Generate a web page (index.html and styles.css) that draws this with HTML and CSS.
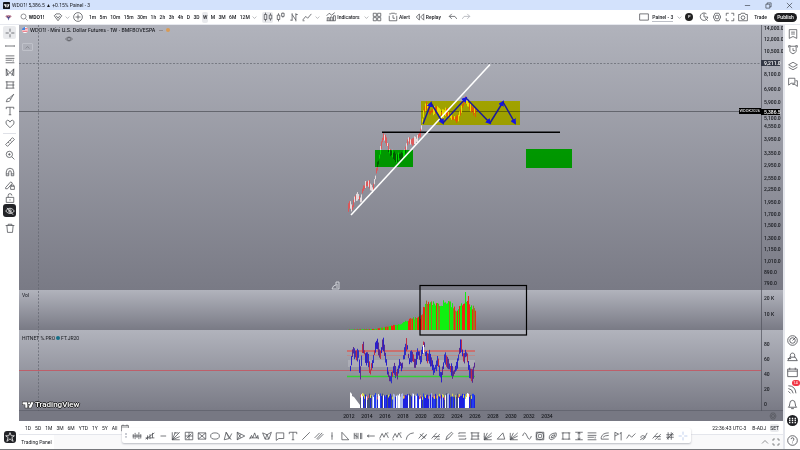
FILE: index.html
```html
<!DOCTYPE html>
<html lang="en">
<head>
    <meta charset="UTF-8">
    <title>WDO1! 5,386.5 ▲ +0.15% Painel - 3</title>
    <link rel="stylesheet" href="styles.css">
</head>
<body>
<header class="titlebar">
    <svg class="app_logo" viewBox="0 0 16 16"><rect width="16" height="16" rx="2" fill="#101318"/><path d="M2 5h6v7H5V8H2zM12 5h3l-3 7H9z" fill="#fff"/><circle cx="9.800" cy="6.300" r="1.300" fill="#fff"/></svg>
    <span class="app_title">WDO1! 5,386.5 ▲ +0.15% Painel - 3</span>
    <div class="window_buttons">
        <button data-icon="minimize" aria-label="Minimize"></button>
        <button data-icon="restore" aria-label="Restore"></button>
        <button data-icon="close" aria-label="Close"></button>
    </div>
</header>
<nav class="topbar">
    <button class="avatar" aria-label="Menu"><svg viewBox="0 0 16 16"><path d="M1 6q0-4 7-4t7 4l-4 3H5z" fill="#c08295"/><path d="M5 7h6l-3 8z" fill="#5960a8"/><path d="M4 5l4 3 4-3" fill="none" stroke="#433a70" stroke-width="2"/></svg></button>
    <button class="symbol"><svg data-icon="search"></svg>WDO1!</button>
    <div class="compare">
        <button data-icon="gem" aria-label="Symbol type"></button>
        <button class="chevron" data-icon="down" aria-label="More symbols"></button>
    </div>
    <button class="add" data-icon="plus" aria-label="Compare"></button>
    <div class="intervals">
        <button>1m</button>
        <button>5m</button>
        <button>10m</button>
        <button>15m</button>
        <button>30m</button>
        <button>1h</button>
        <button>2h</button>
        <button>3h</button>
        <button>4h</button>
        <button>D</button>
        <button>3D</button>
        <button class="active">W</button>
        <button>M</button>
        <button>3M</button>
        <button>6M</button>
        <button>12M</button>
    </div>
    <button class="chevron" data-icon="down" aria-label="More intervals"></button>
    <div class="styles">
        <button class="active" data-icon="candles" aria-label="Candles"></button>
        <button data-icon="hollow" aria-label="Hollow candles"></button>
        <button data-icon="bars" aria-label="Bars"></button>
        <button data-icon="line" aria-label="Line"></button>
        <button class="chevron" data-icon="down" aria-label="More styles"></button>
    </div>
    <button class="labelled indicators"><svg data-icon="indicators"></svg>Indicators</button>
    <button class="chevron" data-icon="down" aria-label="Favorite indicators"></button>
    <button class="templates" data-icon="grid" aria-label="Templates"></button>
    <button class="labelled"><svg data-icon="alert"></svg>Alert</button>
    <button class="labelled replay"><svg data-icon="rewind"></svg>Replay</button>
    <button class="undo" data-icon="undo" aria-label="Undo"></button>
    <button class="undo light" data-icon="redo" aria-label="Redo"></button>
    <div class="topbar_right">
        <button data-icon="square" aria-label="Layout"></button>
        <button class="layout_name">Painel - 3</button>
        <button class="chevron" data-icon="down" aria-label="Layouts"></button>
        <button class="badge_p">P</button>
        <button data-icon="quick" aria-label="Quick search"></button>
        <button data-icon="gear" aria-label="Settings"></button>
        <button data-icon="full" aria-label="Fullscreen"></button>
        <button data-icon="camera" aria-label="Snapshot"></button>
        <button class="trade">Trade</button>
        <button class="publish">Publish</button>
    </div>
</nav>
<div class="workspace">
    <aside class="rail rail_left">
        <div class="rail_group">
            <button class="active" data-icon="cross" aria-label="Cross"></button>
            <button data-icon="hline" aria-label="Trend lines"></button>
            <button data-icon="fib" aria-label="Fibonacci"></button>
            <button data-icon="xabcd" aria-label="Patterns"></button>
            <button data-icon="forecast" aria-label="Forecast"></button>
            <button data-icon="brush" aria-label="Brush"></button>
            <button data-icon="text" aria-label="Text"></button>
            <button data-icon="heart" aria-label="Icons"></button>
        </div>
        <div class="rail_group line">
            <button data-icon="ruler" aria-label="Measure"></button>
            <button data-icon="zoom" aria-label="Zoom in"></button>
        </div>
        <div class="rail_group">
            <button data-icon="magnet" aria-label="Magnet"></button>
            <button data-icon="penlock" aria-label="Stay in drawing mode"></button>
            <button data-icon="lock" aria-label="Lock"></button>
            <button class="dark" data-icon="hide" aria-label="Hide drawings"></button>
        </div>
        <div class="rail_group">
            <button data-icon="trash" aria-label="Remove"></button>
        </div>
        <button class="dark star" data-icon="star" aria-label="Favorites"></button>
    </aside>
    <main class="center">
        <section class="chart">
            <svg class="plot" viewBox="19 25 764 386" preserveAspectRatio="none">
                <defs>
                    <linearGradient id="pane" x2="0" y2="1"><stop stop-color="#b1b3bc"/><stop offset="1" stop-color="#797a85"/></linearGradient>
                    <marker id="arrow" viewBox="0 0 6 6" refX="4" refY="3" markerWidth="6" markerHeight="6" markerUnits="userSpaceOnUse" orient="auto"><path d="M0 0l6 3-6 3z" fill="#1414e6"/></marker>
                </defs>
                <rect x="19" y="25" width="764" height="265" fill="url(#pane)"/>
                <rect x="19" y="290" width="764" height="40" fill="url(#pane)"/>
                <rect x="19" y="330" width="764" height="81" fill="url(#pane)"/>
                <path d="M19 63.500H761M38.500 25V411" class="crosshair"/>
                <path d="M19 111.500H761" class="price_line"/>
                <g id="candles"></g>
                <g id="volume"></g>
                <rect x="348" y="360" width="127" height="7" fill="#fff" opacity=".18"/>
                <path d="M347 351H475" stroke="#f23c30" stroke-width="1.200"/>
                <path d="M347 355.500H475" stroke="#d07a72" stroke-width=".6"/>
                <path d="M347 376.500H475" stroke="#35d035" stroke-width="1.500"/>
                <path d="M19 370.500H761" stroke="#c8505c" stroke-width=".8"/>
                <g id="oscillator"></g>
                <g id="trend"></g>
                <rect x="421" y="101" width="99" height="24" class="zone yellow"/>
                <rect x="375" y="150" width="38" height="17" class="zone green"/>
                <rect x="526" y="149" width="46" height="19" class="zone green"/>
                <path d="M382 132.300H560" stroke="#000" stroke-width="1.400"/>
                <path d="M351 215L490 64.500" stroke="#fff" stroke-width="1.600"/>
                <g class="waves">
                    <path d="M423 124L431 103"/><path d="M431 103L443 123"/><path d="M443 123L466 98"/>
                    <path d="M466 98L490 123"/><path d="M490 123L503 102"/><path d="M503 102L515 123"/>
                </g>
                <rect x="420" y="285.500" width="106.500" height="49.500" fill="none" stroke="#000" stroke-width="1.200"/>
                <path d="M332 289h7v-7h-3v3q-3 0-4 4zM337 284v4" fill="none" stroke="#d8dae0" stroke-width=".9"/>
                <path d="M761.500 25V411" stroke="#50525c" stroke-width=".7"/>
                <path d="M19 411H783" stroke="#50525c"/>
            </svg>
            <div class="legend_main">
                <svg class="flag" viewBox="0 0 16 16"><circle cx="8" cy="8" r="8" fill="#fff"/><path d="M1 4h14M0 8h16M1 12h14" stroke="#e85a68" stroke-width="2"/><path d="M8 0v8H0Q0 1 8 0z" fill="#4084e0"/></svg>
                <span>WDO1! · Mini U.S. Dollar Futures · 1W · BMFBOVESPA</span>
                <i class="dash"></i><i class="dot"></i>
            </div>
            <svg class="eye" data-icon="eye"></svg>
            <button class="collapse" data-icon="up" aria-label="Collapse legend"></button>
            <span class="legend_vol">Vol</span>
            <span class="legend_osc">HITNET %.PRO <i></i>FT.JR20</span>
            <div class="watermark">
                <svg viewBox="0 0 22 14"><path d="M1 2h9v10H6V6H1zM16 2h5l-4 10h-5z"/><circle cx="13" cy="4" r="2"/></svg>
                TradingView
            </div>
            <div class="scale" id="scale"></div>
            <span class="contract">WDOK2026</span>
        </section>
        <div class="time_axis">
            <div id="years"></div>
            <button data-icon="gear" aria-label="Axis settings"></button>
        </div>
        <div class="ranges">
            <button>1D</button>
            <button>5D</button>
            <button>1M</button>
            <button>3M</button>
            <button>6M</button>
            <button>YTD</button>
            <button>1Y</button>
            <button>5Y</button>
            <button>All</button>
            <button class="goto" data-icon="calendar" aria-label="Go to date"></button>
            <span class="clock">22:36:43 UTC-3</span>
            <button>B-ADJ</button>
            <button class="active">SET</button>
        </div>
        <footer class="panel">
            <button class="panel_tab">Trading Panel</button>
            <div class="panel_buttons">
                <button data-icon="up" aria-label="Open panel"></button>
                <button data-icon="full" aria-label="Maximize panel"></button>
            </div>
        </footer>
    </main>
    <aside class="rail rail_right">
        <button data-icon="watch" aria-label="Watchlist"></button>
        <button data-icon="alarm" aria-label="Alerts"></button>
        <button data-icon="layers" aria-label="Object tree"></button>
        <button data-icon="chat" aria-label="Chats"></button>
        <div class="rail_bottom">
            <button data-icon="radar" aria-label="Screeners"></button>
            <button data-icon="pine" aria-label="Pine"></button>
            <button data-icon="calendar" aria-label="Calendar"></button>
            <button class="feed" aria-label="Feed"><svg data-icon="feed"></svg><span>14</span></button>
            <button data-icon="bell" aria-label="Notifications"></button>
            <button class="apps" data-icon="apps" aria-label="Products"></button>
            <button class="help" data-icon="help" aria-label="Help"></button>
        </div>
    </aside>
</div>
<div class="drawbar" id="drawbar"></div>
<script src="chart.js"></script>
</body>
</html>
```

FILE: styles.css
```css
*{
    box-sizing: border-box;
}
html, body{
    height: 100%;
}
body{
    margin: 0;
    display: flex;
    flex-direction: column;
    overflow: hidden;
    background-color: white;
    border-bottom: 1px solid #77787c;
    font-family: Roboto, "Liberation Sans", sans-serif;
    font-size: 6px;
    line-height: 8px;
    color: #16181d;
}
button{
    display: flex;
    align-items: center;
    justify-content: center;
    flex: none;
    margin: 0;
    padding: 0;
    border: 0;
    background: none;
    font: inherit;
    color: inherit;
    cursor: pointer;
}
svg{
    display: block;
    flex: none;
}
.icon{
    width: 10px;
    height: 10px;
    fill: none;
    stroke: #4b4d53;
    stroke-width: 1.2;
}
.titlebar{
    display: flex;
    align-items: center;
    flex: none;
    height: 10px;
    padding-left: 3px;
    background-color: #d3e2fc;
}
.app_logo{
    width: 7px;
    height: 7px;
    margin-right: 2px;
}
.app_title{
    font-size: 5px;
}
.window_buttons{
    display: flex;
    margin-left: auto;
}
.window_buttons>button{
    width: 21px;
    height: 10px;
}
.window_buttons .icon{
    width: 7px;
    height: 7px;
    stroke: #16181d;
}
.topbar{
    display: flex;
    align-items: center;
    flex: none;
    height: 15px;
    padding: 0 3px 0 4px;
    border-bottom: 1px solid #e6e8ee;
    font-size: 5px;
    font-weight: 500;
}
.avatar, .avatar svg{
    width: 9px;
    height: 7px;
}
.symbol{
    width: 26px;
    margin: 0 8px 0 6px;
    gap: 1px;
    font-weight: bold;
}
.symbol .icon{
    width: 8px;
    height: 8px;
}
.compare{
    display: flex;
    gap: 1px;
}
.chevron{
    width: 6px;
}
.chevron .icon{
    width: 5px;
    height: 5px;
}
.add{
    margin: 0 5px 0 3px;
}
.intervals{
    display: flex;
    flex: none;
    width: 163px;
    justify-content: space-between;
}
.intervals>button{
    height: 11px;
    padding: 0 1px;
}
button.active{
    background-color: #e9eaed;
    border-radius: 2px;
}
.styles{
    display: flex;
    align-items: center;
    gap: 2px;
    margin: 0 6px 0 5px;
}
.styles>button{
    width: 11px;
    height: 11px;
}
.styles>.chevron{
    width: 6px;
}
.labelled{
    gap: 1px;
    margin-left: 6px;
}
.labelled.indicators{
    width: 34px;
    margin: 0 3px 0 0;
}
.templates{
    margin-left: 3px;
}
.replay{
    margin-left: 5px;
}
.undo{
    margin-left: 7px;
}
.light .icon{
    stroke: #a7a9b0;
}
.undo + .undo{
    margin-left: 3px;
}
.topbar_right{
    display: flex;
    align-items: center;
    gap: 3px;
    margin-left: auto;
}
.layout_name{
    border-bottom: 1px solid #bcbfc7;
}
.badge_p{
    width: 8px;
    height: 8px;
    margin-right: 3px;
    border-radius: 4px;
    background-color: #222;
    color: white;
    font-size: 4px;
}
.trade{
    margin: 0 4px 0 3px;
}
.publish{
    width: 23px;
    height: 9px;
    border-radius: 5px;
    background-color: #1d1d1f;
    color: white;
}
.workspace{
    display: flex;
    flex: 1;
    min-height: 0;
}
.rail{
    display: flex;
    flex-direction: column;
    align-items: center;
    flex: none;
}
.rail_left{
    width: 19px;
    padding-top: 1px;
}
.rail_left button{
    width: 13px;
    height: 13px;
}
.rail_group{
    padding-bottom: 4px;
}
.rail_group:first-child{
    padding-bottom: 3px;
}
.rail_group.line{
    padding-top: 1px;
    border-top: 1px solid #dfe1e7;
}
.dark{
    border-radius: 3px;
    background-color: #222327;
}
.dark .icon{
    stroke: white;
}
.rail_left>.star{
    width: 12px;
    height: 12px;
    margin: auto 0 6px;
}
.rail_right{
    width: 17px;
    padding-top: 1px;
    border-left: 2px solid #e4e6ec;
}
.rail_right button{
    width: 14px;
    height: 16px;
}
.rail_bottom{
    margin-top: auto;
    padding-bottom: 1px;
}
.rail_bottom .icon, .apps{
    width: 11px;
    height: 11px;
}
.feed{
    position: relative;
}
.feed>span{
    position: absolute;
    top: 0;
    right: 0;
    width: 8px;
    border-radius: 4px;
    background-color: #f23645;
    color: white;
    font-size: 4px;
    line-height: 6px;
}
.help{
    margin: 4px 0 0;
}
.center{
    display: flex;
    flex-direction: column;
    flex: 1;
    min-width: 0;
}
.chart{
    position: relative;
    flex: 1;
    min-height: 0;
}
.plot{
    position: absolute;
    width: 100%;
    height: 100%;
}
.crosshair{
    fill: none;
    stroke: #62646e;
    stroke-width: .7;
    stroke-dasharray: 2 1.500;
}
.price_line{
    stroke: #4b4d55;
    stroke-width: .7;
}
.zone{
    mix-blend-mode: multiply;
}
.yellow{
    fill: #ffff00;
}
.green{
    fill: #00ff00;
}
.waves>path{
    stroke: #1b1b9c;
    stroke-width: 1.500;
    marker-end: url(#arrow);
}
.legend_main{
    position: absolute;
    top: 1px;
    left: 3px;
    display: flex;
    align-items: center;
    font-family: Inter, "Liberation Sans", sans-serif;
    font-size: 5px;
    font-weight: 500;
}
.flag{
    width: 6px;
    height: 6px;
    margin-right: 2px;
}
.dash{
    width: 4px;
    height: 1px;
    margin: 0 3px 0 4px;
    background-color: #8f8c91;
}
.dot{
    width: 4px;
    height: 4px;
    border-radius: 2px;
    background-color: #d99b55;
}
.chart>.eye{
    position: absolute;
    top: 10px;
    left: 46px;
    width: 8px;
    height: 8px;
}
.collapse{
    position: absolute;
    top: 18px;
    left: 3px;
    width: 11px;
    height: 8px;
    border: 1px solid #bfc1c9;
    border-radius: 1px;
}
.collapse .icon{
    width: 5px;
    height: 5px;
}
.legend_vol, .legend_osc{
    position: absolute;
    left: 3px;
    top: 69%;
    font-size: 5px;
}
.legend_osc{
    top: 80%;
    display: flex;
    align-items: center;
}
.legend_osc>i{
    width: 4px;
    height: 4px;
    margin: 0 1px;
    border-radius: 2px;
    background-color: #167088;
}
.watermark{
    position: absolute;
    bottom: 2px;
    left: 3px;
    display: flex;
    align-items: center;
    gap: 1px;
    color: white;
    font-size: 8px;
    font-weight: 500;
    text-shadow: 1px 0 #222, -1px 0 #222, 0 1px #222, 0 -1px #222;
}
.watermark>svg{
    width: 12px;
    height: 8px;
    fill: white;
    stroke: #222;
    stroke-width: 2;
    paint-order: stroke;
}
.scale{
    position: absolute;
    top: 0;
    right: 0;
    width: 22px;
    height: 100%;
    overflow: hidden;
    font-size: 5px;
    font-weight: 500;
    line-height: 6px;
}
.scale>span{
    position: absolute;
    left: 0;
    width: 19px;
    padding-left: 3px;
    transform: translateY(-50%);
}
.scale>.badge_cursor{
    background-color: #343845;
    color: white;
}
.scale>.badge_last, .contract{
    background-color: black;
    color: white;
}
.contract{
    position: absolute;
    top: 22.3%;
    right: 22px;
    padding: 0 1px;
    transform: translateY(-50%);
    font-size: 4px;
    line-height: 6px;
}
.time_axis{
    position: relative;
    display: flex;
    align-items: center;
    justify-content: flex-end;
    flex: none;
    height: 10px;
    padding-right: 6px;
    background-color: #777883;
    font-size: 5px;
    font-weight: 500;
}
.time_axis span{
    position: absolute;
    top: 1px;
    transform: translateX(-50%);
}
.time_axis .icon{
    width: 8px;
    height: 8px;
}
.ranges{
    display: flex;
    align-items: center;
    flex: none;
    gap: 4px;
    height: 14px;
    padding: 0 4px 0 6px;
    border-bottom: 1px solid #e4e6ec;
    font-size: 5px;
}
.goto .icon{
    width: 8px;
    height: 8px;
}
.clock{
    margin: 0 2px 0 auto;
}
.panel{
    display: flex;
    flex: none;
    justify-content: space-between;
    height: 14px;
    background-color: #f9f9fa;
}
.panel_tab{
    width: 35px;
    background-color: white;
    font-size: 5px;
}
.panel_buttons{
    display: flex;
    align-items: center;
    gap: 3px;
    padding-right: 3px;
}
.panel_buttons .icon{
    width: 8px;
    height: 8px;
}
.drawbar{
    position: absolute;
    left: 122px;
    bottom: 7px;
    display: flex;
    align-items: center;
    height: 15px;
    padding: 0 2px 0 8px;
    border-radius: 2px;
    background-color: white;
    box-shadow: 0 1px 2px #b9bbc2;
}
.drawbar::before{
    content: "";
    position: absolute;
    left: 3px;
    height: 5px;
    border-left: 2px dotted #c9cbd2;
}
.drawbar>button{
    width: 13px;
    height: 13px;
}
.drawbar>button:last-child .icon{
    stroke: #aec2e8;
}
```

FILE: chart.js
```javascript
const icons = {
    minimize: 'M2 8h12',
    restore: 'M2 5h9v9H2zM5 5V2h9v9h-3',
    close: 'M2 2l12 12M14 2L2 14',
    search: 'M2 7a5 5 0 1 0 10 0a5 5 0 1 0-10 0M11 11l4 4',
    gem: 'M2 6l3-3h6l3 3-6 8zM5 6l3 4 3-4',
    down: 'M2 5l6 6 6-6',
    up: 'M2 11l6-6 6 6',
    plus: 'M1 8a7 7 0 1 0 14 0a7 7 0 1 0-14 0M8 4v8M4 8h8',
    candles: 'M4 1v3M4 12v3M2 4h4v8H2zM12 2v3M12 11v3M10 5h4v6h-4z',
    hollow: 'M4 2v3M4 12v3M2 5h4v7H2zM11 1v1M11 7v2M9 2h4v5H9z',
    bars: 'M2 13h3M5 2v12M5 4l6 9M11 2v13M11 4h3',
    line: 'M1 13l5-6 3 3 6-7M1 14h3',
    indicators: 'M1 14h14M2 14V9h3v5M7 14V8h3v6M12 14V6h3v8M1 6l4-4 4 3 5-4',
    grid: 'M2 2h5v5H2zM9 2h5v5H9zM2 9h5v5H2zM9 9h5v5H9z',
    alert: 'M2 3h3M11 3h3M2 6v8h12V6M8 5v5h3M5 2h6',
    rewind: 'M7 3L2 8l5 5zM14 3L9 8l5 5z',
    undo: 'M6 3L2 7l4 4M2 7h9l3 4',
    redo: 'M10 3l4 4-4 4M14 7H5l-3 4',
    square: 'M1 3h14v10H1z',
    quick: 'M12 3a6 6 0 1 0 2 5M8 2v6h6M10 10l4 4',
    gear: 'M2 8l3-6h6l3 6-3 6H5zM5 8a3 3 0 1 0 6 0a3 3 0 1 0-6 0',
    full: 'M2 6V2h4M10 2h4v4M14 10v4h-4M6 14H2v-4',
    camera: 'M1 4h3l1-2h6l1 2h3v10H1zM5 9a3 3 0 1 0 6 0a3 3 0 1 0-6 0',
    cross: 'M8 1v5M8 10v5M1 8h5M10 8h5',
    hline: 'M1 8h14M1 7v2M15 7v2',
    fib: 'M1 3h14M1 7h14M1 10h10M1 14h14M13 9v3',
    xabcd: 'M2 14V3l6 6 6-6v11l-6-5zM2 3l3 11M14 3l-3 11',
    forecast: 'M3 2v12M1 3h14M3 8h12M1 13h14M13 3v10',
    brush: 'M2 14q1-6 5-6l2 2q0 4-7 4zM7 8l7-6-5 8',
    text: 'M2 5V2h12v3M8 2v12M6 14h4',
    heart: 'M8 14L2 8q-2-5 2-6 3 0 4 3 1-3 4-3 4 1 2 6z',
    ruler: 'M1 12L12 1l3 3L4 15zM5 8l2 2M8 5l2 2',
    zoom: 'M2 7a5 5 0 1 0 10 0a5 5 0 1 0-10 0M11 11l4 4M7 5v4M5 7h4',
    magnet: 'M2 14V8a6 6 0 0 1 12 0v6h-4V8a2 2 0 0 0-4 0v6zM2 11h4M10 11h4',
    penlock: 'M1 12l8-9 3 2-8 9H1zM9 10h6v5H9zM10 10V8h4v2',
    lock: 'M2 7h12v8H2zM5 7V4a3 3 0 0 1 6 0M8 10v2',
    hide: 'M1 8q7-9 14 0-7 8-14 0M6 8a2 2 0 1 0 4 0a2 2 0 1 0-4 0M3 3l10 11',
    eye: 'M1 8q7-8 14 0-7 8-14 0M5 8a3 3 0 1 0 6 0a3 3 0 1 0-6 0',
    trash: 'M1 4h14M5 4V2h6v2M3 4l1 11h8l1-11',
    star: 'M8 1l2 5h5l-4 3 2 6-5-4-5 4 2-6-4-3h5z',
    watch: 'M2 1h12v14l-6-3-6 3zM5 5h6M5 8h6',
    alarm: 'M3 2h10v8q-5 8-10 0zM1 4V1h3M12 1h3v3M8 5v4h3',
    layers: 'M8 2l7 4-7 4-7-4zM1 10l7 4 7-4',
    chat: 'M1 2h10v8H5l-4 3zM12 6h3v9l-4-3H7',
    radar: 'M1 8a7 7 0 1 0 14 0a7 7 0 1 0-14 0M4 8a4 4 0 1 0 8 0a4 4 0 1 0-8 0M8 8l5-5',
    pine: 'M1 14h14l-3-5H4zM5 9q-1-6 3-6t3 6M1 11h5',
    calendar: 'M1 3h14v11H1zM1 6h14M4 1v3M12 1v3',
    feed: 'M2 4q10 0 11 11M2 8q6 1 7 7M2 12l3 3',
    bell: 'M2 12q2-1 2-5 0-5 4-5t4 5q0 4 2 5zM6 14h4',
    help: 'M1 8a7 7 0 1 0 14 0a7 7 0 1 0-14 0M6 6q0-2 2-2t2 2-2 3M8 11v1',
    // drawing tools
    barsPattern: 'M2 5v7M5 3v10M8 5v6M11 2v11M14 5v7M1 8h14',
    ghost: 'M1 11h14M4 7v7M8 5v8M12 3v8M1 13L15 3',
    dashLine: 'M4 8h9',
    gannFan: 'M2 2v12h12M2 14L14 2M2 14l5-12M2 14l12-5M5 3h7',
    gannBox: 'M2 2h12v12H2zM8 2v12M2 8h12M4 12l8-8',
    rotated: 'M2 3h12v10H2zM2 3l12 10M2 13L14 3',
    ellipse: 'M1 8a7 5 0 1 0 14 0a7 5 0 1 0-14 0',
    abcd: 'M2 14L5 2l5 10 4-8M5 2l8 12M2 14l8-2',
    triangles: 'M2 2v12l12-6zM2 2l6 9M2 14l6-9',
    head: 'M1 13l3-6 2 4 3-8 3 8 2-4 1 6M1 11h14',
    threeDrives: 'M1 3l4 10 3-7 3 7 4-11M1 3l7 3 7-4M5 13h6',
    callout: 'M2 3h12v9H6l-4 3z',
    slash: 'M2 14L14 2',
    channel: 'M1 11L9 3M6 14l9-9M4 13l9-10',
    vline: 'M8 2v12M7 8h2',
    triangle: 'M3 2v12h11z',
    cycles: 'M2 3v10M5 3v10M8 3v10M12 3v10M14 3v10M2 6l6 4',
    arrow: 'M14 8H2M5 6L2 8l3 2',
    elliott: 'M1 12l4-8 3 6 3-7 4 8M1 14h2M13 3h2',
    curve: 'M2 14Q3 4 14 3',
    pitch: 'M1 12L9 3M5 14l9-9M3 5l9 7M8 12l5-5',
    pitchfan: 'M1 12l8-9M5 14l9-9M4 9h10M9 13h5',
    pen: 'M3 14l2-6 7-6 2 2-6 7z',
    levels: 'M3 3h11M2 8h12M3 13h11M3 3v2M14 11v2',
    fan: 'M2 14L14 3M2 14V3M2 14h12M2 14L7 3M2 14l12-6M2 9l5 5',
    wedge: 'M2 13h12L11 3z',
    wave: 'M1 8q3-10 7 0t7 0',
    circles: 'M2 8a6 6 0 1 0 12 0a6 6 0 1 0-12 0M5 8a3 3 0 1 0 6 0a3 3 0 1 0-6 0M2 2h12v12H2z',
    spiral: 'M2 12Q1 4 13 3q2 8-8 11zM5 11Q5 6 11 6q0 5-6 5',
    box: 'M3 3h10v10H3zM1 3h3M12 3h3M1 13h3M12 13h3',
    range: 'M2 2h12M2 14h12M8 2v12M6 5l2-3 2 3M6 11l2 3 2-3',
    arcs: 'M2 13h12M2 10q2-7 12-7M5 10q2-3 9-3M2 10v3',
    flag: 'M3 15V2l6 3-6 3M13 15V2M11 5l2-3',
    zigzag: 'M1 12l4-6 4 4 6-6',
    loop: 'M2 14Q12 10 13 3M3 11q0-5 5-3t-2 6',
    hash: 'M5 2v12M10 2v12M2 6h12M2 10h12M3 13L13 3'
};

function iconMarkup(name) {
    if (name === 'apps') {
        return '<svg class="icon" viewBox="0 0 16 16"><circle cx="8" cy="8" r="8" fill="#1f2024" stroke="none"/>' +
            '<path stroke="#fff" stroke-width="2" d="M3 5h2M7 5h2M11 5h2M3 8h2M7 8h2M11 8h2M3 11h2M7 11h2M11 11h2"/></svg>';
    }
    return '<svg class="icon" viewBox="0 0 16 16"><path d="' + icons[name] + '"/></svg>';
}

const drawTools = ['barsPattern', 'ghost', 'dashLine', 'gannFan', 'gannBox', 'rotated', 'ellipse', 'abcd', 'triangles',
    'head', 'threeDrives', 'callout', 'text', 'slash', 'channel', 'vline', 'triangle', 'cycles', 'arrow', 'elliott',
    'elliott', 'curve', 'pitch', 'pitchfan', 'pen', 'levels', 'forecast', 'fan', 'wedge', 'fan', 'wave', 'circles',
    'spiral', 'box', 'range', 'fib', 'arcs', 'flag', 'zigzag', 'loop', 'pitchfan', 'hash', 'cross'];
document.getElementById('drawbar').innerHTML = drawTools.map(function (name) {
    return '<button data-icon="' + name + '" aria-label="' + name + '"></button>';
}).join('');

document.querySelectorAll('[data-icon]').forEach(function (el) {
    if (el.tagName === 'BUTTON') {
        el.innerHTML = iconMarkup(el.dataset.icon);
    } else {
        el.classList.add('icon');
        el.setAttribute('viewBox', '0 0 16 16');
        el.innerHTML = '<path d="' + icons[el.dataset.icon] + '"/>';
    }
});

// price scale: label and its y on the 25..411 plot
const prices = [['14,000.0', 28], ['12,000.0', 39], ['10,500.0', 51], ['8,100.0', 74], ['6,900.0', 89],
    ['5,900.0', 102], ['5,100.0', 118], ['4,550.0', 126], ['3,950.0', 139], ['3,350.0', 153], ['2,950.0', 165],
    ['2,550.0', 178], ['2,250.0', 189], ['1,950.0', 202], ['1,700.0', 214], ['1,500.0', 225], ['1,300.0', 238],
    ['1,150.0', 249], ['1,010.0', 261], ['890.0', 272], ['790.0', 283], ['20 K', 298], ['10 K', 314], ['80', 344],
    ['60', 359], ['40', 374], ['20', 389], ['0', 404], ['9,211.0', 63.5, 'badge_cursor'], ['5,386.5', 111.5, 'badge_last']];
document.getElementById('scale').innerHTML = prices.map(function (p) {
    return '<span class="' + (p[2] || '') + '" style="top:' + ((p[1] - 25) / 386 * 100).toFixed(2) + '%">' + p[0] + '</span>';
}).join('');

let years = '';
for (let i = 0; i < 12; i++) {
    years += '<span style="left:' + ((330 + i * 18) / 764 * 100).toFixed(2) + '%">' + (2012 + i * 2) + '</span>';
}
document.getElementById('years').innerHTML = years;

let seed = 7;
function rnd() {
    seed = (seed * 16807) % 2147483647;
    return seed / 2147483647;
}

function at(points, x) {
    for (let i = 1; i < points.length; i++) {
        if (x <= points[i][0]) {
            const a = points[i - 1], b = points[i];
            return a[1] + (b[1] - a[1]) * (x - a[0]) / (b[0] - a[0]);
        }
    }
    return points[points.length - 1][1];
}

function bar(x, y1, y2, color, w) {
    return '<path d="M' + x.toFixed(1) + ' ' + y1.toFixed(1) + 'V' + y2.toFixed(1) + '" stroke="' + color + '" stroke-width="' + w + '"/>';
}

const price = [[348, 210], [350, 204], [352, 209], [355, 197], [358, 196], [361, 201], [363, 189], [366, 184], [369, 184],
    [373, 190], [376, 174], [379, 160], [381, 146], [384, 136], [387, 143], [390, 152], [393, 155], [396, 158], [400, 156],
    [404, 155], [406, 149], [408, 139], [412, 143], [417, 139], [420, 135], [422, 126], [424, 110], [427, 106], [430, 112],
    [437, 109], [442, 114], [447, 112], [452, 117], [458, 119], [461, 110], [465, 99], [469, 105], [475, 112]];
let out = '';
for (let x = 348.5; x < 476; x += 1) {
    const y = at(price, x) + (rnd() - .5) * 2;
    const h = 1.5 + rnd() * 3;
    out += bar(x, y - h, y + h, rnd() < .6 ? '#f04a4a' : '#fbeeee', .8);
}
document.getElementById('candles').innerHTML = out;

const volume = [[348, .3], [375, 1], [385, 3], [400, 6], [410, 11], [421, 13], [425, 27], [430, 29], [437, 28],
    [441, 23], [445, 31], [453, 24], [458, 20], [463, 27], [470, 26], [475, 21]];
out = '';
for (let x = 348.5; x < 476; x += 1) {
    let h = at(volume, x) * (.85 + rnd() * .25);
    if (x === 465.5) h = 38;
    if (x === 468.5) h = 34;
    const up = x > 442 && x < 449 ? .95 : .5;
    out += bar(x, 330, 330 - h, rnd() < up ? '#10f010' : rnd() < .7 ? '#ee2a14' : '#9a7a20', 1);
}
document.getElementById('volume').innerHTML = out;

const osc = [[350, 374], [353, 350], [356, 356], [359, 354], [360, 377], [363, 344], [366, 360], [368, 355], [370, 373],
    [373, 363], [375, 348], [378, 344], [380, 358], [383, 343], [386, 360], [388, 375], [391, 379], [394, 368],
    [397, 375], [400, 362], [402, 369], [404, 355], [407, 343], [409, 362], [412, 354], [415, 365], [418, 353],
    [421, 361], [424, 340], [426, 357], [430, 357], [434, 372], [438, 361], [441, 379], [445, 357], [449, 365],
    [453, 374], [457, 366], [461, 344], [464, 359], [466, 351], [470, 373], [473, 376], [475, 360]];
out = '';
const oscColors = ['#2a20c8', '#c02c44', '#5a2a90', '#3030c4'];
for (let x = 350.5; x < 475; x += 1) {
    const y = at(osc, x) + (rnd() - .5) * 3;
    const h = 2 + rnd() * 5;
    out += bar(x, y - h, y + h, oscColors[Math.floor(rnd() * 4)], 1);
}
out += bar(423.5, 345, 353, '#fff', 1);
document.getElementById('oscillator').innerHTML = out;

out = '<path d="M350 392l2 2v2l2 1 6 8v3h-10z" fill="#fff"/>';
const trendColors = ['#1d20e0', '#1d20e0', '#2340ee', '#fff', '#a8b4e6', '#44507c'];
for (let x = 360.5; x < 475; x += 1) {
    const top = 393 + rnd() * 4;
    out += bar(x, 408, top, trendColors[Math.floor(rnd() * 6)], 1);
    if (rnd() < .3) out += bar(x, top, top + 3, rnd() < .6 ? '#d8d850' : '#d06070', 1);
}
document.getElementById('trend').innerHTML = out;
```
